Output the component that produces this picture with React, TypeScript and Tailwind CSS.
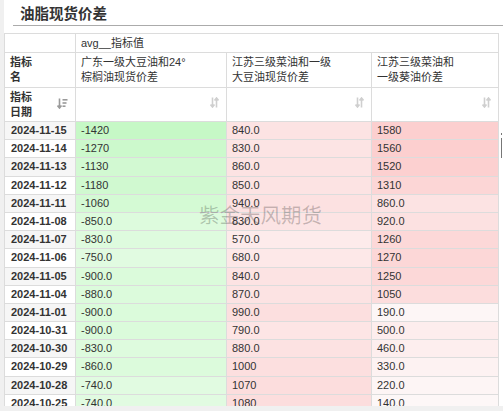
import React from 'react';

type Row = { date: string; a: string; b: string; c: string };

const rows: Row[] = [
    { date: '2024-11-15', a: '-1420', b: '840.0', c: '1580' },
    { date: '2024-11-14', a: '-1270', b: '830.0', c: '1560' },
    { date: '2024-11-13', a: '-1130', b: '860.0', c: '1520' },
    { date: '2024-11-12', a: '-1180', b: '850.0', c: '1310' },
    { date: '2024-11-11', a: '-1060', b: '940.0', c: '860.0' },
    { date: '2024-11-08', a: '-850.0', b: '830.0', c: '920.0' },
    { date: '2024-11-07', a: '-830.0', b: '570.0', c: '1260' },
    { date: '2024-11-06', a: '-750.0', b: '680.0', c: '1270' },
    { date: '2024-11-05', a: '-900.0', b: '840.0', c: '1250' },
    { date: '2024-11-04', a: '-880.0', b: '870.0', c: '1050' },
    { date: '2024-11-01', a: '-900.0', b: '990.0', c: '190.0' },
    { date: '2024-10-31', a: '-900.0', b: '790.0', c: '500.0' },
    { date: '2024-10-30', a: '-830.0', b: '880.0', c: '460.0' },
    { date: '2024-10-29', a: '-860.0', b: '1000', c: '330.0' },
    { date: '2024-10-28', a: '-740.0', b: '1070', c: '220.0' },
    { date: '2024-10-25', a: '-740.0', b: '1080', c: '140.0' },
];

const mix = (from: number[], to: number[], t: number) => {
    const k = Math.max(0, Math.min(1, t));
    const c = from.map((f, i) => Math.round(f + (to[i] - f) * k));
    return `rgb(${c[0]}, ${c[1]}, ${c[2]})`;
};

// green for the negative column, red for the positive ones
const greenBg = (v: number) => mix([255, 255, 255], [198, 248, 198], Math.abs(v) / 1420);
const redBg = (v: number) => mix([253, 251, 251], [252, 206, 206], v / 1600);

const SortIcon = () => (
    <svg width="9" height="11" viewBox="0 0 9 11" className="shrink-0">
        <path d="M2.5 0.5v9M0.5 7.5l2 2.5 2-2.5" stroke="#cfcfcf" strokeWidth="1.6" fill="none" />
        <path d="M6.5 10.5v-9M4.5 3.5l2-2.5 2 2.5" stroke="#cfcfcf" strokeWidth="1.6" fill="none" />
    </svg>
);

const SortDescIcon = () => (
    <svg width="11" height="11" viewBox="0 0 11 11" className="shrink-0">
        <path d="M2.5 0.5v9M0.5 7.5l2 2.5 2-2.5" stroke="#9a9a9a" strokeWidth="1.6" fill="none" />
        <rect x="5.5" y="1" width="5" height="1.6" fill="#9a9a9a" />
        <rect x="5.5" y="4.2" width="4" height="1.6" fill="#9a9a9a" />
        <rect x="5.5" y="7.4" width="3" height="1.6" fill="#9a9a9a" />
    </svg>
);

const cell = 'border-r border-b border-[#dcdcdc]';

const App = () => {
    return (
        <div className="w-[503px] h-[411px] bg-[#f0f0f0] overflow-hidden text-[#333] font-['Liberation_Sans','Noto_Sans_CJK_SC',sans-serif]">
            <div className="ml-[4px] h-[406px] bg-white relative overflow-hidden">
                {/* Title */}
                <div className="ml-[9px] h-[26px] border-b border-[#ababab] pl-[7px] pt-[3px] text-[14.5px] leading-[19px] font-bold font-['Noto_Sans_CJK_SC',sans-serif] text-[#333]">
                    油脂现货价差
                </div>

                {/* Table */}
                <div className="mt-[7px] w-[495px] border-l border-t border-[#dcdcdc] text-[11px]">
                    <div className="grid grid-cols-[71px_151px_145px_127px] h-[19px]">
                        <div className={`${cell} bg-white`}></div>
                        <div className={`${cell} col-span-3 pl-[5px] leading-[18px] bg-white`}>avg__指标值</div>
                    </div>
                    <div className="grid grid-cols-[71px_151px_145px_127px] h-[35px] leading-[15px]">
                        <div className={`${cell} px-[5px] pt-[2px] font-bold`}>指标<br />名</div>
                        <div className={`${cell} px-[5px] pt-[2px]`}>广东一级大豆油和24°<br />棕榈油现货价差</div>
                        <div className={`${cell} px-[5px] pt-[2px]`}>江苏三级菜油和一级<br />大豆油现货价差</div>
                        <div className={`${cell} px-[5px] pt-[2px]`}>江苏三级菜油和<br />一级葵油价差</div>
                    </div>
                    <div className="grid grid-cols-[71px_151px_145px_127px] h-[34px] leading-[15px]">
                        <div className={`${cell} px-[5px] pt-[2px] font-bold flex justify-between`}>
                            <span>指标<br />日期</span>
                            <span className="pt-[8px] pr-[2px]"><SortDescIcon /></span>
                        </div>
                        <div className={`${cell} flex justify-end items-start pt-[9px] pr-[7px]`}><SortIcon /></div>
                        <div className={`${cell} flex justify-end items-start pt-[9px] pr-[7px]`}><SortIcon /></div>
                        <div className={`${cell} flex justify-end items-start pt-[9px] pr-[7px]`}><SortIcon /></div>
                    </div>
                    {rows.map((r, i) => (
                        <div key={r.date} className="grid grid-cols-[71px_151px_145px_127px] h-[18.2px] leading-[17px]">
                            <div className={`${cell} pl-[6px] font-bold ${i % 2 === 0 ? 'bg-[#f6f6f6]' : 'bg-white'}`}>{r.date}</div>
                            <div className={`${cell} pl-[5px]`} style={{ backgroundColor: greenBg(parseFloat(r.a)) }}>{r.a}</div>
                            <div className={`${cell} pl-[5px]`} style={{ backgroundColor: redBg(parseFloat(r.b)) }}>{r.b}</div>
                            <div className={`${cell} pl-[5px]`} style={{ backgroundColor: redBg(parseFloat(r.c)) }}>{r.c}</div>
                        </div>
                    ))}
                </div>

                {/* watermark */}
                <div className="absolute left-[195px] top-[201px] text-[20.5px] leading-[26px] text-[rgba(0,0,0,0.22)] font-['Noto_Sans_CJK_SC',sans-serif] pointer-events-none select-none">
                    紫金天风期货
                </div>

                {/* scrollbar marks */}
                <div className="absolute left-[497px] top-[133px] w-[1px] h-[2px] bg-[#777]"></div>
                <div className="absolute left-[497px] top-[138px] w-[1px] h-[20px] bg-[#777]"></div>
            </div>
        </div>
    );
};

export default App;
